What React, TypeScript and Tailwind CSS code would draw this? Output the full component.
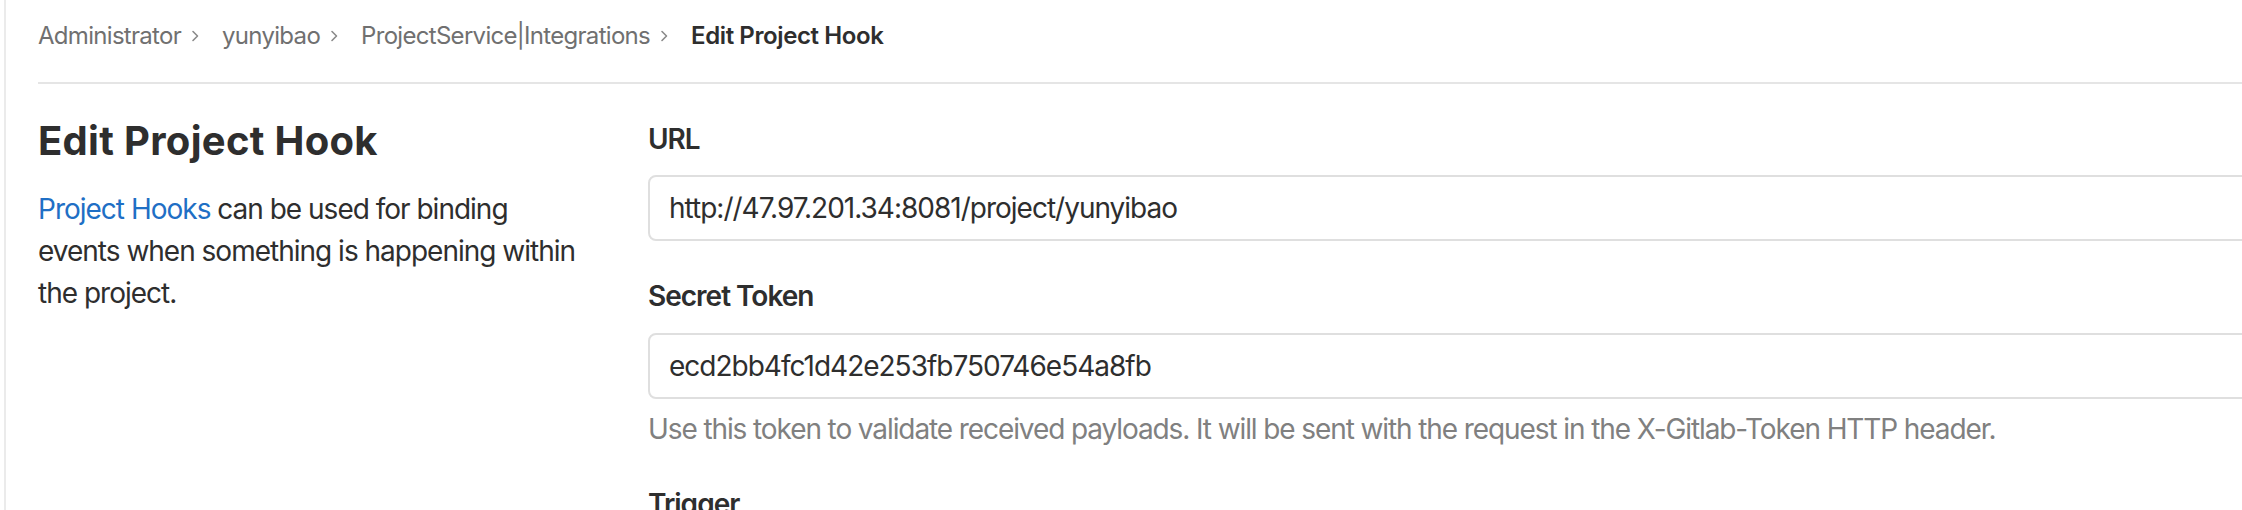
import React from "react";

const Chevron = () => (
  <svg width="10" height="14" viewBox="0 0 10 14" className="ml-[9px] mr-[22px] shrink-0" fill="none">
    <path d="M3 2.5 L7.5 7 L3 11.5" stroke="#8a8a8a" strokeWidth="1.6" strokeLinecap="round" strokeLinejoin="round" />
  </svg>
);

export default function App() {
  return (
    <div
      className="w-[2242px] h-[510px] overflow-hidden bg-white flex text-[#2e2e2e]"
      style={{ fontFamily: "Inter, 'Noto Sans', 'Liberation Sans', sans-serif" }}
    >
      <div className="w-[4px] shrink-0" />
      <div className="flex-1 min-w-0 border-l-2 border-[#ebebeb] pl-[32px]">
        {/* Breadcrumb */}
        <div className="h-[84px] border-b-2 border-[#e5e5e5] pt-[22px]">
          <div className="flex items-center text-[24px] leading-[28px] tracking-[-0.7px] text-[#707070]">
            <span>Administrator</span>
            <Chevron />
            <span>yunyibao</span>
            <Chevron />
            <span>ProjectService|Integrations</span>
            <Chevron />
            <span className="font-semibold text-[#2e2e2e] tracking-[-0.4px]">Edit Project Hook</span>
          </div>
        </div>

        {/* Row */}
        <div className="flex">
          <div className="w-[550px] shrink-0 pt-[33px]">
            <h3 className="text-[40px] leading-[48px] font-bold tracking-[0.3px]">Edit Project Hook</h3>
            <p className="mt-[23px] text-[28px] leading-[42px] tracking-[-1px]">
              <span className="text-[#1f6fc5]">Project Hooks</span> can be used for binding events when something is
              happening within the project.
            </p>
          </div>
          <div className="flex-1 min-w-0 ml-[60px] pt-[34px] tracking-[-1px]">
            <div className="text-[28px] leading-[42px] font-semibold">URL</div>
            <div className="mt-[15px] -mr-[20px] h-[66px] rounded-[8px] border-2 border-[#dfdfdf] flex items-center px-[19px] text-[28px]">
              http://47.97.201.34:8081/project/yunyibao
            </div>
            <div className="mt-[34px] text-[28px] leading-[42px] font-semibold">Secret Token</div>
            <div className="mt-[16px] -mr-[20px] h-[66px] rounded-[8px] border-2 border-[#dfdfdf] flex items-center px-[19px] text-[28px]">
              ecd2bb4fc1d42e253fb750746e54a8fb
            </div>
            <div className="mt-[9px] text-[28px] leading-[42px] tracking-[-1.1px] text-[#808080]">
              Use this token to validate received payloads. It will be sent with the request in the X-Gitlab-Token HTTP
              header.
            </div>
            <div className="mt-[33px] text-[28px] leading-[42px] font-semibold">Trigger</div>
          </div>
        </div>
      </div>
    </div>
  );
}
